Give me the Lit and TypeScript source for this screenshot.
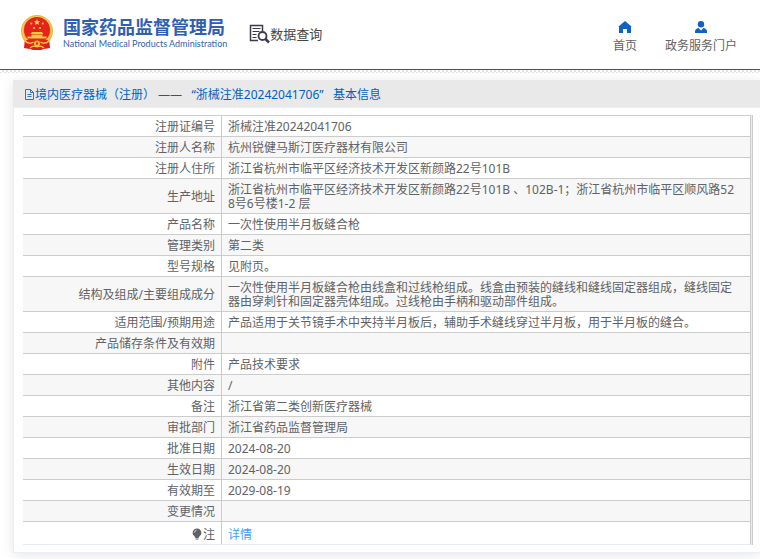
import { LitElement, html, css } from "lit";
import { customElement } from "lit/decorators.js";

const rows: [string, string][] = [
  ["注册证编号", "浙械注准20242041706"],
  ["注册人名称", "杭州锐健马斯汀医疗器材有限公司"],
  ["注册人住所", "浙江省杭州市临平区经济技术开发区新颜路22号101B"],
  ["生产地址", "浙江省杭州市临平区经济技术开发区新颜路22号101B 、102B-1；浙江省杭州市临平区顺风路528号6号楼1-2 层"],
  ["产品名称", "一次性使用半月板缝合枪"],
  ["管理类别", "第二类"],
  ["型号规格", "见附页。"],
  ["结构及组成/主要组成成分", "一次性使用半月板缝合枪由线盒和过线枪组成。线盒由预装的缝线和缝线固定器组成，缝线固定器由穿刺针和固定器壳体组成。过线枪由手柄和驱动部件组成。"],
  ["适用范围/预期用途", "产品适用于关节镜手术中夹持半月板后，辅助手术缝线穿过半月板，用于半月板的缝合。"],
  ["产品储存条件及有效期", ""],
  ["附件", "产品技术要求"],
  ["其他内容", "/"],
  ["备注", "浙江省第二类创新医疗器械"],
  ["审批部门", "浙江省药品监督管理局"],
  ["批准日期", "2024-08-20"],
  ["生效日期", "2024-08-20"],
  ["有效期至", "2029-08-19"],
  ["变更情况", ""],
];

@customElement("app-root")
export class AppRoot extends LitElement {
  static styles = css`
    :host {
      display: block;
      overflow: hidden;
      color: #606266;
      font: 12px/14px "Noto Sans", "Noto Sans CJK SC", sans-serif;
    }
    a {
      color: inherit;
      text-decoration: none;
    }
    svg {
      display: block;
      flex: none;
    }
    .top {
      display: flex;
      align-items: center;
      height: 69px;
      padding: 0 23px 0 20px;
      box-sizing: border-box;
    }
    .rule {
      height: 3px;
      border-top: 1px solid #0a62b4;
      background: conic-gradient(#e4e4e4 25%, #fff 0 50%, #e4e4e4 0 75%, #fff 0) 0 0 / 4px 4px;
    }
    .brand {
      display: flex;
      align-items: center;
      gap: 9px;
      padding-bottom: 6px;
      color: #2f5fb3;
    }
    .names {
      display: flex;
      flex-direction: column;
      padding-top: 4px;
    }
    .cn {
      font: 700 18px/20px "Noto Sans CJK SC", sans-serif;
    }
    .en {
      font: 9px/16px Lato, sans-serif;
    }
    .query {
      display: flex;
      align-items: center;
      margin-left: 22px;
      padding-bottom: 2px;
      font-size: 13px;
      line-height: 20px;
      color: #444;
    }
    nav {
      display: flex;
      gap: 28px;
      margin-left: auto;
      padding-top: 4px;
    }
    nav a {
      display: flex;
      flex-direction: column;
      align-items: center;
      gap: 5px;
    }
    .card {
      margin: 7px 0 6px 13px;
      border: 1px solid #ebeef5;
      border-width: 0 0 1px 1px;
      box-shadow: 0 2px 12px rgba(0, 0, 0, 0.1);
    }
    h1 {
      display: flex;
      align-items: center;
      margin: 0 0 0 -1px;
      height: 28px;
      padding: 2px 11px 0;
      box-sizing: border-box;
      border-bottom: 1px solid #ebeef5;
      background: #e9e9e9;
      color: #0061c5;
      font-size: 12px;
      font-weight: 400;
      white-space: pre;
    }
    .frame {
      margin: 7px 7px 7px 9px;
      padding-right: 1px;
      border-right: 1px solid #ccc;
      background: #e6ebf5;
    }
    table {
      width: 100%;
      table-layout: fixed;
      border-spacing: 0;
      background: #fff;
    }
    .labels {
      width: 199px;
    }
    th,
    td {
      padding: 4px 10px 2px 6px;
      border-top: 1px solid #ccc;
      border-right: 1px solid #ccc;
      font-weight: 400;
      text-align: left;
      word-break: break-all;
    }
    th {
      padding-right: 6px;
      text-align: right;
    }
    tr:nth-child(even) {
      background: #f7f7f7;
    }
    .last th,
    .last td {
      padding-top: 6px;
      border-bottom: 1px solid #e6ebf5;
    }
    .last {
      background: #fff;
    }
    .note {
      display: flex;
      justify-content: flex-end;
      align-items: flex-start;
      gap: 1px;
    }
    .more {
      color: #409eff;
    }
  `;

  render() {
    return html`
      <header class="top">
        <a class="brand" href="#">
          <svg width="34" height="36" viewBox="0 0 34 36" aria-hidden="true">
            <path d="M5 24 4 34l6 1 3 1h8l3-1 6-1-1-10z" fill="#d8201c" />
            <circle cx="17" cy="17" r="16" fill="#e9b338" />
            <circle cx="17" cy="17" r="14.6" fill="none" stroke="#f6d163" stroke-width="1" />
            <circle cx="17" cy="16" r="13" fill="#e5231c" />
            <path d="m17 5 .9 2.200 2.300.1-1.800 1.500.6 2.300-2-1.300-2 1.300.6-2.300-1.800-1.500 2.300-.1z" fill="#f9d849" />
            <g fill="#f5c83e">
              <circle cx="11.2" cy="9.5" r="1.1" />
              <circle cx="22.8" cy="9.5" r="1.1" />
              <circle cx="14" cy="14" r="1.1" />
              <circle cx="20" cy="14" r="1.1" />
              <path d="M12 18h10l1.500 2h-13zM11.500 20.500h11v2h4v2h-19v-2h4z" />
            </g>
            <path d="M6 26h22l-3 6H9z" fill="#e5231c" />
            <circle cx="17" cy="29.500" r="3" fill="#f2c23c" />
            <circle cx="17" cy="29.500" r="1.200" fill="#e5231c" />
            <path d="M5 27q5 4 8.500 1M29 27q-5 4-8.500 1M10 34q3-3 7-1 4-2 7 1" fill="none" stroke="#f2c23c" stroke-width="1.300" />
          </svg>
          <span class="names">
            <span class="cn">国家药品监督管理局</span>
            <span class="en">National Medical Products Administration</span>
          </span>
        </a>
        <a class="query" href="#">
          <svg width="21" height="20" viewBox="0 0 21 20" fill="none" stroke="#3b3b50" aria-hidden="true">
            <path d="M9 16.500H1.500v-15h12V7" stroke-width="1.500" />
            <path d="M3.500 4.500h8M3.500 7.500h7M3.500 10.500h4M3.500 13.500h4" />
            <circle cx="13.500" cy="12" r="4" stroke-width="1.800" />
            <path d="m16.500 15 3.500 3.500" stroke-width="2.500" />
          </svg>
          数据查询
        </a>
        <nav>
          <a href="#">
            <svg width="14" height="13" viewBox="0 0 14 13" fill="#0d62c4" aria-hidden="true">
              <path d="M7 0 .5 5.500 1 6v6h4V8h4v4h4V6l.5-.5z" />
            </svg>
            首页
          </a>
          <a href="#">
            <svg width="14" height="13" viewBox="0 0 14 13" fill="#0d62c4" aria-hidden="true">
              <circle cx="7" cy="3.200" r="3.200" />
              <path d="M1 12V10.500q0-2.500 3.500-3.500L7 9.500 9.500 7Q13 8 13 10.500V12z" />
            </svg>
            政务服务门户
          </a>
        </nav>
      </header>
      <div class="rule"></div>
      <main class="card">
        <h1><svg width="11" height="12" viewBox="0 0 11 12" fill="none" stroke="#2f74c4" aria-hidden="true"><path d="M1.500 .5h5l3 3v7h-8zM6.500 .5v3h3M3.500 5.500h4M3.500 7.500h4" /></svg>境内医疗器械（注册） ——&nbsp;&nbsp; “浙械注准20242041706”&nbsp;&nbsp; 基本信息</h1>
        <div class="frame">
          <table>
            <colgroup><col class="labels" /><col /></colgroup>
            <tbody>
              ${rows.map(([label, value]) => html`<tr><th scope="row">${label}</th><td>${value}</td></tr>`)}
              <tr class="last">
                <th scope="row">
                  <span class="note">
                    <svg width="10" height="12" viewBox="0 0 10 12" fill="#606266" aria-hidden="true">
                      <path d="M5 .5a4.300 4.300 0 0 1 2.500 7.800L6.500 10h-3l-1-1.700A4.300 4.300 0 0 1 5 .5zM3.500 10.500h3v1h-3z" />
                      <path d="M2.500 4.500q.3-2 2-2.300" fill="none" stroke="#fff" stroke-width=".8" />
                    </svg>
                    注
                  </span>
                </th>
                <td><a class="more" href="#">详情</a></td>
              </tr>
            </tbody>
          </table>
        </div>
      </main>
    `;
  }
}
